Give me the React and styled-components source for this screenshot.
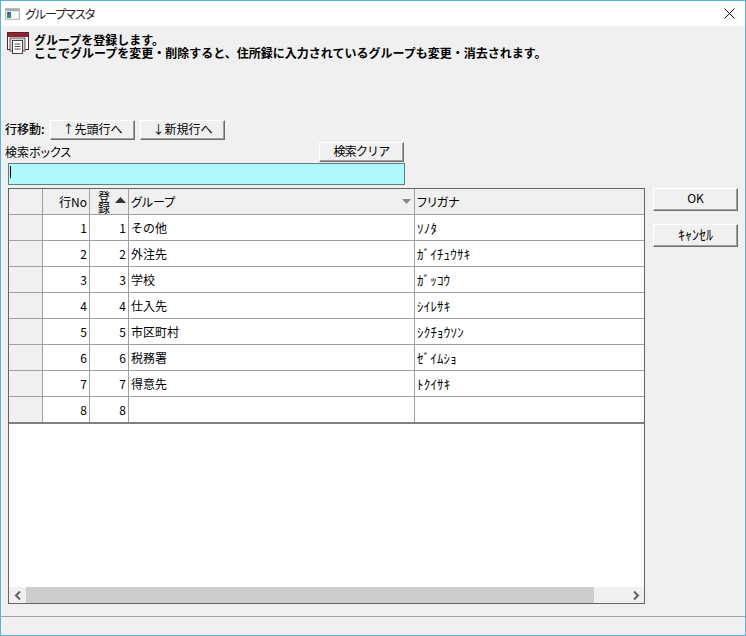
import React from 'react';
import styled, { createGlobalStyle } from 'styled-components';

const rows = [
  [1, 'その他', 'ｿﾉﾀ'],
  [2, '外注先', 'ｶﾞｲﾁｭｳｻｷ'],
  [3, '学校', 'ｶﾞｯｺｳ'],
  [4, '仕入先', 'ｼｲﾚｻｷ'],
  [5, '市区町村', 'ｼｸﾁｮｳｿﾝ'],
  [6, '税務署', 'ｾﾞｲﾑｼｮ'],
  [7, '得意先', 'ﾄｸｲｻｷ'],
  [8, '', ''],
];

const GlobalStyle = createGlobalStyle`
  html, body { margin: 0; padding: 0; }
  body {
    background: #f0f0f0;
    font-family: "Noto Sans CJK JP", "Liberation Sans", sans-serif;
    font-size: 12px;
    color: #000;
  }
`;

const Window = styled.div`
  width: 746px;
  height: 636px;
  box-sizing: border-box;
  border: 1px solid #5fb1dc;
  background: #f0f0f0;
  display: flex;
  flex-direction: column;
  overflow: hidden;
`;

const TitleBar = styled.div`
  height: 25px;
  flex: none;
  background: #fff;
  display: flex;
  align-items: center;
  padding: 0 10px 0 4px;
  gap: 4px;
  color: #222;
`;

const TitleText = styled.span`
  flex: 1;
  font-size: 12px;
  font-feature-settings: "palt";
  letter-spacing: -1px;
`;

const Body = styled.div`
  flex: 1;
  display: flex;
  flex-direction: column;
  min-height: 0;
`;

const Message = styled.div`
  height: 94px;
  flex: none;
  display: flex;
  gap: 5px;
  padding: 6px 0 0 6px;
  box-sizing: border-box;
`;

const MessageText = styled.div`
  font-size: 12px;
  line-height: 13px;
  font-weight: 700;
  padding-top: 1px;
`;

const Main = styled.div`
  flex: 1;
  display: flex;
  min-height: 0;
  padding-left: 3px;
`;

const Left = styled.div`
  width: 642px;
  display: flex;
  flex-direction: column;
`;

const MoveRow = styled.div`
  display: flex;
  align-items: center;
  height: 20px;
`;

const MoveLabel = styled.span`
  width: 46px;
  box-sizing: border-box;
  padding: 0 0 3px 1px;
  font-weight: 500;
`;

const Button = styled.button`
  width: 85px;
  height: ${({ $h }) => $h || 20}px;
  margin-left: ${({ $ml }) => $ml || 0}px;
  margin-top: ${({ $mt }) => $mt || 0}px;
  flex: none;
  padding: 0 0 3px;
  box-sizing: border-box;
  background: #f0f0f0;
  border: 1px solid;
  border-color: #fff #6d6d6d #6d6d6d #fff;
  box-shadow: inset -1px -1px 0 #a0a0a0;
  font: inherit;
  font-size: ${({ $size }) => $size || 12}px;
  letter-spacing: ${({ $track }) => $track || 0}px;
  line-height: 1;
  color: #000;
`;

const SearchHead = styled.div`
  display: flex;
  justify-content: space-between;
  align-items: center;
  width: 400px;
  height: 20px;
  margin-top: 2px;
  box-sizing: border-box;
  padding-left: 1px;
`;

const SearchLabel = styled.span`
  font-feature-settings: "palt";
  padding-bottom: 2px;
`;

const SearchInput = styled.div`
  width: 397px;
  height: 22px;
  margin: 1px 0 0 4px;
  box-sizing: border-box;
  background: #aff8fb;
  border: 1px solid #5f7f7f;
  display: flex;
  align-items: flex-start;
  padding: 2px 0 0 1px;
`;

const Caret = styled.span`
  width: 1px;
  height: 12px;
  background: #000;
`;

const Grid = styled.div`
  width: 637px;
  height: 416px;
  margin: 3px 0 0 4px;
  box-sizing: border-box;
  border: 1px solid #646464;
  background: #fff;
  display: flex;
  flex-direction: column;
`;

const Rows = styled.div`
  flex: 1;
  min-height: 0;
`;

const Row = styled.div`
  display: grid;
  grid-template-columns: 34px 47px 39px 286px 1fr;
  height: 26px;
  box-sizing: border-box;
  border-bottom: 1px solid #a0a0a0;
  &:last-child {
    height: 27px;
    border-bottom: 2px solid #808080;
  }
`;

const Cell = styled.div`
  box-sizing: border-box;
  border-right: 1px solid #a0a0a0;
  display: flex;
  align-items: center;
  justify-content: ${({ $right }) => ($right ? 'flex-end' : 'flex-start')};
  padding: 0 2px;
  background: ${({ $shade }) => ($shade ? '#f0f0f0' : '#fff')};
  white-space: nowrap;
  position: relative;
  &:last-child {
    border-right: 0;
  }
`;

const KanaHead = styled.span`
  font-feature-settings: "palt";
`;

const Kana = styled.span`
  font-size: 13px;
  letter-spacing: 0.2px;
`;

const RegisterLabel = styled.div`
  width: 12px;
  margin-left: 6px;
  font-size: 12px;
  line-height: 11px;
  text-align: center;
  white-space: normal;
`;

const SortUp = styled.svg`
  position: absolute;
  right: 2px;
  top: 8px;
`;

const FilterMark = styled.svg`
  position: absolute;
  right: 3px;
  top: 10px;
`;

const ScrollBar = styled.div`
  flex: none;
  height: 16px;
  background: #f0f0f0;
  display: flex;
  align-items: center;
  justify-content: space-between;
`;

const ScrollEnd = styled.div`
  width: 17px;
  height: 16px;
  display: flex;
  align-items: center;
  justify-content: center;
  flex: none;
`;

const ScrollTrack = styled.div`
  flex: 1;
  height: 16px;
  padding-right: 33px;
`;

const ScrollThumb = styled.div`
  height: 100%;
  background: #cdcdcd;
`;

const Side = styled.div`
  display: flex;
  flex-direction: column;
  padding: 68px 0 0 7px;
`;

const StatusBar = styled.div`
  flex: none;
  height: 19px;
  box-sizing: border-box;
  border-top: 1px solid #a0a0a0;
  margin-top: 12px;
`;

function WindowIcon() {
  return (
    <svg width="16" height="14" viewBox="0 0 16 14">
      <rect x="0.5" y="1.5" width="14" height="11" fill="#e6ebec" stroke="#b4bcbf" />
      <rect x="1" y="2" width="13" height="2" fill="#a3adb2" />
      <rect x="2" y="5" width="4" height="6" fill="#3f8478" />
      <rect x="3" y="5" width="2" height="2" fill="#3a5f8c" />
      <rect x="7" y="5" width="6" height="6" fill="#fbfcfc" />
    </svg>
  );
}

function BookIcon() {
  return (
    <svg width="22" height="22" viewBox="0 0 22 22">
      <rect x="0.5" y="0.5" width="21" height="17" fill="#fff" stroke="#5a1f2a" />
      <rect x="1" y="1" width="20" height="4" fill="#8c2432" />
      <rect x="3" y="6" width="15" height="13" fill="#ded6da" stroke="#5d5d5d" />
      <rect x="5.5" y="8.5" width="10" height="13" fill="#fff" stroke="#444" />
      <path d="M7.5 12h6M7.5 14.5h6M7.5 17h6" stroke="#555" strokeWidth="1" />
    </svg>
  );
}

export default function App() {
  return (
    <>
      <GlobalStyle />
      <Window>
        <TitleBar>
          <WindowIcon />
          <TitleText>グループマスタ</TitleText>
          <svg width="11" height="11" viewBox="0 0 11 11">
            <path d="M0.5 0.5l10 10M10.5 0.5l-10 10" stroke="#111" strokeWidth="1" />
          </svg>
        </TitleBar>
        <Body>
          <Message>
            <BookIcon />
            <MessageText>
              グループを登録します。
              <br />
              ここでグループを変更・削除すると、住所録に入力されているグループも変更・消去されます。
            </MessageText>
          </Message>
          <Main>
            <Left>
              <MoveRow>
                <MoveLabel>行移動:</MoveLabel>
                <Button>↑先頭行へ</Button>
                <Button $ml={5}>↓新規行へ</Button>
              </MoveRow>
              <SearchHead>
                <SearchLabel>検索ボックス</SearchLabel>
                <Button $track={-0.8}>検索クリア</Button>
              </SearchHead>
              <SearchInput>
                <Caret />
              </SearchInput>
              <Grid>
                <Rows>
                  <Row>
                    <Cell $shade />
                    <Cell $shade $right>行No</Cell>
                    <Cell $shade>
                      <RegisterLabel>登録</RegisterLabel>
                      <SortUp width="11" height="6" viewBox="0 0 11 6">
                        <path d="M5.5 0L11 6H0z" fill="#333" />
                      </SortUp>
                    </Cell>
                    <Cell $shade>
                      <KanaHead>グループ</KanaHead>
                      <FilterMark width="9" height="5" viewBox="0 0 9 5">
                        <path d="M0 0h9L4.5 5z" fill="#888" />
                      </FilterMark>
                    </Cell>
                    <Cell $shade>
                      <KanaHead>フリガナ</KanaHead>
                    </Cell>
                  </Row>
                  {rows.map(([no, group, kana]) => (
                    <Row key={no}>
                      <Cell $shade />
                      <Cell $right>{no}</Cell>
                      <Cell $right>{no}</Cell>
                      <Cell>{group}</Cell>
                      <Cell>
                        <Kana>{kana}</Kana>
                      </Cell>
                    </Row>
                  ))}
                </Rows>
                <ScrollBar>
                  <ScrollEnd>
                    <svg width="8" height="9" viewBox="0 0 8 9">
                      <path d="M6 0.5L2 4.5l4 4" fill="none" stroke="#606060" strokeWidth="2" />
                    </svg>
                  </ScrollEnd>
                  <ScrollTrack>
                    <ScrollThumb />
                  </ScrollTrack>
                  <ScrollEnd>
                    <svg width="8" height="9" viewBox="0 0 8 9">
                      <path d="M2 0.5l4 4-4 4" fill="none" stroke="#606060" strokeWidth="2" />
                    </svg>
                  </ScrollEnd>
                </ScrollBar>
              </Grid>
            </Left>
            <Side>
              <Button $h={23}>OK</Button>
              <Button $h={23} $mt={13} $size={14}>ｷｬﾝｾﾙ</Button>
            </Side>
          </Main>
          <StatusBar />
        </Body>
      </Window>
    </>
  );
}
